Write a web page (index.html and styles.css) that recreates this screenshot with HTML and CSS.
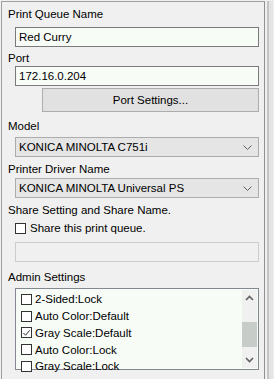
FILE: index.html
```html
<!DOCTYPE html>
<html>
<head>
<meta charset="utf-8">
<link rel="stylesheet" href="styles.css">
</head>
<body>
<div class="frame">
  <div class="panel">
    <div class="label l1">Print Queue Name</div>
    <div class="field text">Red Curry</div>
    <div class="label l2">Port</div>
    <div class="field text">172.16.0.204</div>
    <div class="btn">Port Settings...</div>
    <div class="label l3">Model</div>
    <div class="field combo"><span>KONICA MINOLTA C751i</span>
      <svg class="chev" width="9" height="5" viewBox="0 0 9 5"><path d="M0.5 0.5 L4.5 4.5 L8.5 0.5" fill="none" stroke="#606060" stroke-width="1"/></svg>
    </div>
    <div class="label l4">Printer Driver Name</div>
    <div class="field combo"><span>KONICA MINOLTA Universal PS</span>
      <svg class="chev" width="9" height="5" viewBox="0 0 9 5"><path d="M0.5 0.5 L4.5 4.5 L8.5 0.5" fill="none" stroke="#606060" stroke-width="1"/></svg>
    </div>
    <div class="label l5">Share Setting and Share Name.</div>
    <div class="check-row"><span class="box"></span><span>Share this print queue.</span></div>
    <div class="field disabled"></div>
    <div class="label l6">Admin Settings</div>
    <div class="list">
      <div class="items">
        <div class="item"><span class="box"></span><span>2-Sided:Lock</span></div>
        <div class="item"><span class="box"></span><span>Auto Color:Default</span></div>
        <div class="item"><span class="box"><svg width="10" height="10" viewBox="0 0 10 10"><path d="M1.5 5 L4 7.5 L8.5 2" fill="none" stroke="#333" stroke-width="1.1"/></svg></span><span>Gray Scale:Default</span></div>
        <div class="item"><span class="box"></span><span>Auto Color:Lock</span></div>
        <div class="item"><span class="box"></span><span>Gray Scale:Lock</span></div>
      </div>
      <div class="vscroll">
        <svg class="arrow" width="9" height="6" viewBox="0 0 9 6"><path d="M1 5 L4.5 1.5 L8 5" fill="none" stroke="#606060" stroke-width="1.6"/></svg>
        <div class="track"><div class="thumb"></div></div>
        <svg class="arrow" width="9" height="6" viewBox="0 0 9 6"><path d="M1 1 L4.5 4.5 L8 1" fill="none" stroke="#606060" stroke-width="1.6"/></svg>
      </div>
    </div>
  </div>
  <div class="splitter"><div class="s1"></div><div class="s2"></div><div class="s3"></div></div>
</div>
</body>
</html>
```
FILE: styles.css
```css
html, body {
  margin: 0;
  padding: 0;
  background: #f0f0f0;
}
body {
  font-family: "Liberation Sans", Arial, sans-serif;
  font-size: 11.5px;
  color: #000;
  width: 274px;
  height: 379px;
  overflow: hidden;
}
.frame {
  display: flex;
  height: 379px;
  padding-top: 1px;
  box-sizing: border-box;
}
.panel {
  width: 264px;
  margin-left: 1px;
  border-left: 1px solid #a0a0a0;
  border-top: 1px solid #a0a0a0;
  border-right: 1px solid #909090;
  padding: 5px 5px 0 6px;
  box-sizing: border-box;
  display: flex;
  flex-direction: column;
  flex-shrink: 0;
}
.label {
  height: 14px;
  line-height: 14px;
  white-space: nowrap;
}
.l1 { margin-bottom: 6px; }
.l2 { margin-top: 4px; margin-bottom: 1px; }
.l3 { margin-top: 7px; margin-bottom: 4px; }
.l4 { margin-top: 5px; margin-bottom: 2px; }
.l5 { margin-top: 5px; }
.l6 { margin-top: 8px; margin-bottom: 4px; }
.field {
  margin-left: 7px;
  height: 20px;
  box-sizing: border-box;
  display: flex;
  align-items: center;
  padding-left: 3px;
  white-space: nowrap;
}
.text {
  background: #f7fcf7;
  border: 1px solid #7a7a7a;
}
.btn {
  margin-left: 34px;
  margin-top: 2px;
  height: 24px;
  box-sizing: border-box;
  background: #e1e1e1;
  border: 1px solid #adadad;
  display: flex;
  align-items: center;
  justify-content: center;
}
.combo {
  background: #e5e5e5;
  border: 1px solid #acacac;
  justify-content: space-between;
  padding-right: 6px;
}
.chev { display: block; }
.check-row {
  margin-top: 4px;
  margin-left: 7px;
  height: 14px;
  display: flex;
  align-items: center;
  gap: 4px;
}
.box {
  width: 11px;
  height: 11px;
  box-sizing: border-box;
  border: 1px solid #333;
  background: #fff;
  display: flex;
  align-items: center;
  justify-content: center;
  flex-shrink: 0;
}
.box svg { display: block; }
.disabled {
  margin-top: 7px;
  background: #f0f0f0;
  border: 1px solid #cccccc;
}
.list {
  margin-left: 7px;
  height: 82px;
  box-sizing: border-box;
  border: 1px solid #828790;
  background: #f7fcf7;
  display: flex;
}
.items {
  flex: 1;
  padding-top: 2px;
  padding-left: 5px;
}
.item {
  height: 16.75px;
  display: flex;
  align-items: center;
  gap: 3px;
  white-space: nowrap;
}
.vscroll {
  width: 15px;
  margin: 1px 1px 1px 0;
  background: #f0f0f0;
  display: flex;
  flex-direction: column;
  align-items: center;
}
.arrow { display: block; margin: 5px 0; }
.track {
  flex: 1;
  width: 100%;
  position: relative;
}
.thumb {
  position: absolute;
  left: 0;
  right: 0;
  top: 16px;
  height: 25px;
  background: #c8ccc8;
}
.splitter {
  display: flex;
  height: 100%;
}
.s1 { width: 2px; background: #f0f0f0; }
.s2 { width: 2px; background: #c4c4c4; }
.s3 { width: 4px; background: #e4e4e4; }
```
